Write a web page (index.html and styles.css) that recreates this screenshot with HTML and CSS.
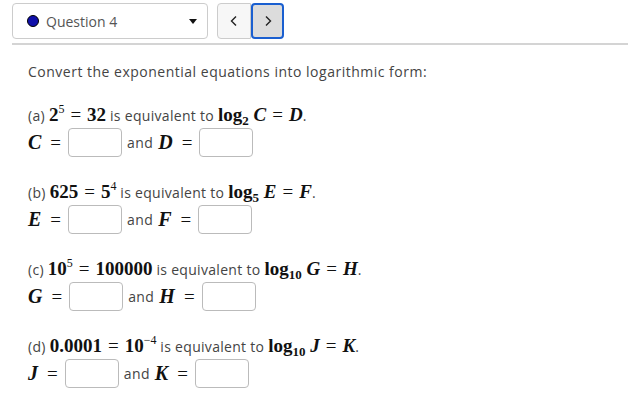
FILE: index.html
```html
<!DOCTYPE html>
<html lang="en">
<head>
  <meta charset="UTF-8" />
  <title>Question 4</title>
  <link rel="stylesheet" href="styles.css">
</head>
<body>

  <!-- Question picker -->
  <div class="toolbar">
    <div class="picker">
      <span class="dot"></span>
      <span class="picker-label">Question 4</span>
      <span class="caret"></span>
    </div>
    <div class="nav">
      <button class="nav-btn" aria-label="Previous">
        <svg width="10" height="12" viewBox="0 0 10 12"><path d="M7 1.5 L2.5 6 L7 10.5" fill="none" stroke="#222" stroke-width="1.4"/></svg>
      </button>
      <button class="nav-btn current" aria-label="Next">
        <svg width="10" height="12" viewBox="0 0 10 12"><path d="M3 1.5 L7.5 6 L3 10.5" fill="none" stroke="#222" stroke-width="1.4"/></svg>
      </button>
    </div>
  </div>

  <div class="content">
    <p class="intro">Convert the exponential equations into logarithmic form:</p>

    <!-- (a) -->
    <div class="problem">
      <div class="question">(a) <span class="m"><b>2<sup>5</sup></b><span class="eq">=</span><b>32</b></span> is equivalent to <span class="m"><b>log</b><sub>2</sub> <i>C</i><span class="eq">=</span><i>D</i></span>.</div>
      <div class="answers">
        <span class="m"><i>C</i><span class="eq">=</span></span>
        <input type="text" />
        <span class="and">and</span>
        <span class="m"><i>D</i><span class="eq">=</span></span>
        <input type="text" />
      </div>
    </div>

    <!-- (b) -->
    <div class="problem">
      <div class="question">(b) <span class="m"><b>625</b><span class="eq">=</span><b>5<sup>4</sup></b></span> is equivalent to <span class="m"><b>log</b><sub>5</sub> <i>E</i><span class="eq">=</span><i>F</i></span>.</div>
      <div class="answers">
        <span class="m"><i>E</i><span class="eq">=</span></span>
        <input type="text" />
        <span class="and">and</span>
        <span class="m"><i>F</i><span class="eq">=</span></span>
        <input type="text" />
      </div>
    </div>

    <!-- (c) -->
    <div class="problem">
      <div class="question">(c) <span class="m"><b>10<sup>5</sup></b><span class="eq">=</span><b>100000</b></span> is equivalent to <span class="m"><b>log</b><sub>10</sub> <i>G</i><span class="eq">=</span><i>H</i></span>.</div>
      <div class="answers">
        <span class="m"><i>G</i><span class="eq">=</span></span>
        <input type="text" />
        <span class="and">and</span>
        <span class="m"><i>H</i><span class="eq">=</span></span>
        <input type="text" />
      </div>
    </div>

    <!-- (d) -->
    <div class="problem">
      <div class="question">(d) <span class="m"><b>0.0001</b><span class="eq">=</span><b>10<sup>&minus;4</sup></b></span> is equivalent to <span class="m"><b>log</b><sub>10</sub> <i>J</i><span class="eq">=</span><i>K</i></span>.</div>
      <div class="answers">
        <span class="m"><i>J</i><span class="eq">=</span></span>
        <input type="text" />
        <span class="and">and</span>
        <span class="m"><i>K</i><span class="eq">=</span></span>
        <input type="text" />
      </div>
    </div>
  </div>

</body>
</html>
```

FILE: styles.css
```css
body {
  margin: 0;
  font-family: "Open Sans", Arial, sans-serif;
  font-size: 14px;
  color: #444;
  background: #fff;
}
.toolbar {
  display: flex;
  gap: 9px;
  margin-left: 12px;
  padding: 3px 0 4px;
  border-bottom: 2px solid #d4d4d4;
}
.picker {
  width: 170px;
  height: 34px;
  border: 1px solid #ccc;
  border-radius: 4px;
  display: flex;
  align-items: center;
  padding: 0 10px 0 14px;
}
.dot {
  width: 10px;
  height: 10px;
  border-radius: 50%;
  background: #1010aa;
  border: 1px solid #000;
  margin-right: 7px;
}
.picker-label {
  flex: 1;
  color: #555;
}
.caret {
  width: 0;
  height: 0;
  border-left: 4px solid transparent;
  border-right: 4px solid transparent;
  border-top: 5px solid #111;
}
.nav {
  display: flex;
}
.nav-btn {
  width: 34px;
  height: 36px;
  border: 1px solid #ccc;
  border-radius: 4px 0 0 4px;
  background: #f7f7f7;
  display: flex;
  align-items: center;
  justify-content: center;
  padding: 0;
}
.nav-btn.current {
  width: 33px;
  border: 2px solid #1a5fd0;
  border-radius: 4px;
  background: #dcdcdc;
}
.content {
  padding: 17px 0 0 28px;
}
.intro {
  margin: 0 0 21px;
  line-height: 20px;
  letter-spacing: 0.5px;
}
.problem {
  margin-bottom: 23px;
}
.question {
  height: 24px;
  line-height: 24px;
  white-space: nowrap;
  letter-spacing: 0.3px;
}
.answers {
  display: flex;
  align-items: center;
  height: 29px;
  margin-top: 1px;
}
.m {
  font-family: "Liberation Serif", "Times New Roman", serif;
  font-size: 19px;
  color: #111;
  letter-spacing: 0;
}
.m b {
  font-weight: bold;
}
.m i {
  font-style: italic;
  font-weight: bold;
}
.m sup {
  font-size: 12px;
  vertical-align: 8px;
  line-height: 0;
  font-weight: normal;
}
.m sub {
  font-size: 13px;
  vertical-align: -4px;
  line-height: 0;
  font-weight: bold;
}
.eq {
  margin: 0 6px;
  font-weight: normal;
}
.answers .m i {
  font-size: 20px;
}
.answers .eq {
  margin: 0 7px 0 9px;
}
input {
  width: 54px;
  height: 29px;
  box-sizing: border-box;
  border: 1px solid #bbb;
  border-radius: 4px;
  padding: 0 4px;
  margin: 0;
}
.and {
  margin: 0 5px;
  letter-spacing: 0.4px;
}
```
